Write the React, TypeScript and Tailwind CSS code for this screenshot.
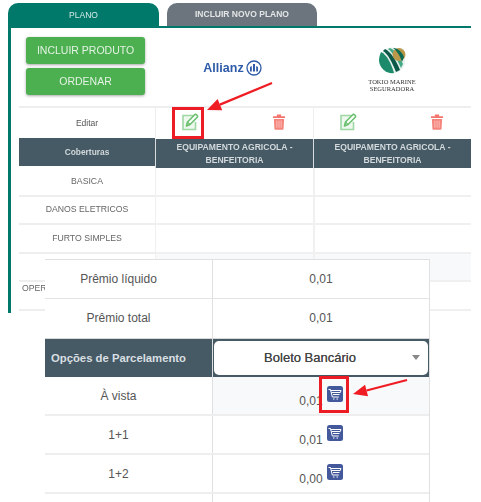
import React from "react";

const EditIcon = () => (
  <svg width="18" height="18" viewBox="0 0 18 18" fill="none" className="block">
    <path d="M12.500 2.500H2v14h12.500V9" stroke="#9ed8a4" strokeWidth="1.600" fill="#eef8ef" />
    <path d="M5.500 13l1-4L14 1.500c1-.7 3 1.300 2.500 2.500L9 11.500z" fill="#fff" stroke="#6cc070" strokeWidth="1.600" strokeLinejoin="round" />
    <path d="M6.500 9l2.500 2.500" stroke="#6cc070" strokeWidth="1.200" />
  </svg>
);

const TrashIcon = () => (
  <svg width="12" height="16" viewBox="0 0 14 18" preserveAspectRatio="none" className="block">
    <path d="M4.500 .5h5V2.500h4.500v2H0v-2h4.500z" fill="#f4756d" />
    <path d="M1 5.500h12l-.7 11.500a1 1 0 0 1-1 .8H2.700a1 1 0 0 1-1-.8z" fill="#f5847c" />
    <path d="M4.500 7.500v8M7 7.500v8M9.500 7.500v8" stroke="#fbc9c5" strokeWidth="1" />
  </svg>
);

const CartIcon = () => (
  <svg width="16" height="16" viewBox="0 0 16 16" className="block">
    <rect width="16" height="16" rx="2.500" fill="#43599c" />
    <path d="M1.500 3.500h2l1.800 7.500h6.500M3.700 4.500h10.300l-.7 2H4.500M6 8.500h6.500" stroke="#fff" strokeWidth="1" fill="none" />
    <path d="M6 13h1.500M9.500 13H11" stroke="#fff" strokeWidth="1.200" />
  </svg>
);

const TokioLogo = () => (
  <svg width="28" height="27" viewBox="0 0 28 27" className="block">
    <circle cx="14" cy="13.500" r="13" fill="#e8f2ec" />
    <path d="M3 5c6 3 10 11 13 21-7 1-14-4-15-12 0-3 .7-6 2-9z" fill="#1d8b6b" />
    <path d="M7 2c6 3 11 11 15 21l-4 2C14 15 10 7 5 4z" fill="#0b5a49" />
    <path d="M12 1c5 2 10 9 13 16l-2 4C19 12 15 6 10 2z" fill="#43a986" />
    <circle cx="21" cy="7.500" r="6.500" fill="#b9984a" />
    <path d="M15 1c3 2 7 7 9 14l2-5c-1-4-6-9-11-9z" fill="#0f6a55" />
  </svg>
);

const AllianzMark = () => (
  <svg width="16" height="16" viewBox="0 0 16 16" className="block">
    <circle cx="8" cy="8" r="7" fill="none" stroke="#2f5ba8" strokeWidth="1.300" />
    <path d="M4 11.500V7l1.800-1v5.500zM7 11.500V4h2v7.500zM10.200 11.500V6l1.800 1v4.500z" fill="#2f5ba8" />
  </svg>
);

const Arrow = ({ x1, y1, x2, y2 }: { x1: number; y1: number; x2: number; y2: number }) => {
  const a = Math.atan2(y2 - y1, x2 - x1);
  const l = 14;
  const w = 6;
  const bx = x2 - l * Math.cos(a);
  const by = y2 - l * Math.sin(a);
  const px = -Math.sin(a) * w;
  const py = Math.cos(a) * w;
  return (
    <>
      <line x1={x1} y1={y1} x2={bx} y2={by} stroke="#ef1c24" strokeWidth="2.200" />
      <polygon points={`${x2},${y2} ${bx + px},${by + py} ${bx - px},${by - py}`} fill="#ef1c24" />
    </>
  );
};

const covers = ["BASICA", "DANOS ELETRICOS", "FURTO SIMPLES", "", "OPER"];

const rowsBottom = [
  { label: "À vista", value: "0,01", shade: true, h: "h-[39px]" },
  { label: "1+1", value: "0,01", shade: false, h: "h-[39px]" },
  { label: "1+2", value: "0,00", shade: false, h: "h-[39px]" },
  { label: "", value: "", shade: false, h: "h-[8px]" },
];

export default function App() {
  return (
    <div className="relative w-[481px] h-[502px] overflow-hidden bg-white font-['Liberation_Sans',Arial,sans-serif]">
      {/* upper screenshot */}
      <div className="pl-[8px] pr-[10px] pt-[3px] h-[313px] blur-[0.35px]">
        <div className="flex gap-[8px] items-start h-[23px]">
          <div className="w-[151px] h-[24px] bg-[#00796b] rounded-t-[10px] flex items-center justify-center text-[8.500px] text-[#d4ebe6]">
            PLANO
          </div>
          <div className="w-[150px] h-[23px] bg-[#6c757d] rounded-t-[10px] flex items-center justify-center text-[8.500px] font-bold text-[#e3e5e7]">
            INCLUIR NOVO PLANO
          </div>
        </div>
        <div className="border-t-[2px] border-l-[3px] border-[#00796b] h-[287px] pl-[8px]">
          <div className="grid grid-cols-[136px_158px_158px] h-[80px] border-b-[2px] border-[#eeeeee]">
            <div className="pt-[9px] pl-[7px] flex flex-col gap-[4px]">
              <div className="w-[119px] h-[27px] bg-[#4caf50] rounded-[3px] shadow-[0_1px_3px_rgba(0,0,0,0.35)] flex items-center justify-center text-[10.500px] text-[#e4f3e4]">
                INCLUIR PRODUTO
              </div>
              <div className="w-[119px] h-[27px] bg-[#4caf50] rounded-[3px] shadow-[0_1px_3px_rgba(0,0,0,0.35)] flex items-center justify-center text-[10.500px] text-[#e4f3e4]">
                ORDENAR
              </div>
            </div>
            <div className="flex items-center justify-center gap-[2px] pt-[2px] pr-[3px]">
              <span className="text-[12.500px] font-bold text-[#2f5ba8]">Allianz</span>
              <AllianzMark />
            </div>
            <div className="flex flex-col items-center justify-start pt-[19px]">
              <TokioLogo />
              <span className="mt-[4px] text-[6.500px] leading-[7px] text-[#333] font-['Liberation_Serif',serif] text-center">
                TOKIO MARINE
                <br />
                SEGURADORA
              </span>
            </div>
          </div>
          <div className="grid grid-cols-[136px_158px_158px] h-[30px]">
            <div className="flex items-center justify-center text-[8.500px] text-[#555]">Editar</div>
            <div className="border-l-[1px] border-[#eeeeee] flex items-center justify-between pl-[25px] pr-[28px] pb-[2px]">
              <EditIcon />
              <TrashIcon />
            </div>
            <div className="border-l-[1px] border-[#eeeeee] flex items-center justify-between pl-[25px] pr-[28px] pb-[2px]">
              <EditIcon />
              <TrashIcon />
            </div>
          </div>
          <div className="grid grid-cols-[136px_158px_158px] h-[30px] text-[#d3d9dc]">
            <div className="h-[28px] bg-[#455a64] flex items-center justify-center text-[8.400px] font-bold">Coberturas</div>
            <div className="h-[29px] mt-[1px] bg-[#455a64] flex items-center justify-center text-center text-[8.600px] leading-[13px] font-bold px-[8px] border-l-[1px] border-[#d8dcde]">
              EQUIPAMENTO AGRICOLA - BENFEITORIA
            </div>
            <div className="h-[29px] mt-[1px] bg-[#455a64] flex items-center justify-center text-center text-[8.600px] leading-[13px] font-bold px-[8px] border-l-[1px] border-[#d8dcde]">
              EQUIPAMENTO AGRICOLA - BENFEITORIA
            </div>
          </div>
          {covers.map((c, i) => (
            <div key={i} className="grid grid-cols-[136px_158px_158px] h-[28.500px]">
              <div className="border-b-[2px] border-[#eeeeee] flex items-center justify-center text-[8.700px] text-[#666]">
                <span className={c === "OPER" ? "w-full pl-[3px] pb-[14px]" : ""}>{c}</span>
              </div>
              <div className={`border-l-[1px] border-b-[2px] border-[#f0f0f0] ${i === 3 ? "bg-[#f8f9fa]" : ""}`} />
              <div className={`border-l-[2px] border-b-[2px] border-[#f0f0f0] ${i === 3 ? "bg-[#f8f9fa]" : ""}`} />
            </div>
          ))}
        </div>
      </div>

      {/* lower screenshot, laid over the upper one */}
      <div className="absolute left-[45px] top-[259px] w-[385px] h-[243px] bg-white border-r-[1px] border-t-[1px] border-[#e0e0e0] text-[12px] text-[#555]">
        <div className="grid grid-cols-[167px_1fr] h-[39px] border-b-[1px] border-[#e4e4e4]">
          <div className="flex items-center justify-center pr-[20px]">Prêmio líquido</div>
          <div className="flex items-center justify-center border-l-[1px] border-[#e0e0e0] text-[12px]">0,01</div>
        </div>
        <div className="grid grid-cols-[167px_1fr] h-[39px]">
          <div className="flex items-center justify-center pr-[20px] pb-[2px]">Prêmio total</div>
          <div className="flex items-center justify-center border-l-[1px] border-[#e0e0e0] text-[12px] pb-[2px]">0,01</div>
        </div>
        <div className="grid grid-cols-[167px_1fr] h-[39px] border-t-[1px] border-[#d8d8d8] bg-[#455a64]">
          <div className="flex items-center pl-[6px] text-[11.300px] font-bold text-[#d9dfe2]">Opções de Parcelamento</div>
          <div className="border-l-[1px] border-[#e0e0e0] py-[2px] pl-[1px] pr-[1px]">
            <div className="relative h-[34px] bg-white rounded-[5px] flex items-center justify-center pr-[22px] text-[13px] text-[#444] [text-shadow:0_0_0.6px_#555]">
              Boleto Bancário
              <span className="absolute right-[8px] top-[14px] border-x-[4px] border-t-[5px] border-x-transparent border-t-[#888]" />
            </div>
          </div>
        </div>
        {rowsBottom.map((r, i) => (
          <div key={i} className={`grid grid-cols-[167px_1fr] ${r.h} ${r.label ? "border-b-[2px] border-[#eeeeee]" : ""}`}>
            <div className="flex items-center justify-center pr-[20px] pt-[1px]">{r.label}</div>
            <div className={`border-l-[1px] border-[#e0e0e0] flex items-start justify-center pt-[9px] gap-[4px] ${r.shade ? "bg-[#f8f9fa]" : ""}`}>
              {r.value && (
                <>
                  <span className="text-[12px] mt-[6px]">{r.value}</span>
                  <CartIcon />
                </>
              )}
            </div>
          </div>
        ))}
      </div>

      {/* annotations */}
      <div className="absolute left-[172px] top-[107px] w-[32px] h-[32px] border-[3px] border-[#ed1c24]" />
      <div className="absolute left-[319px] top-[376px] w-[30px] h-[37px] border-[3px] border-[#ed1c24]" />
      <svg className="absolute left-0 top-0 pointer-events-none" width="481" height="502">
        <Arrow x1={272} y1={83} x2={207} y2={110} />
        <Arrow x1={407} y1={380} x2={353} y2={394} />
      </svg>
    </div>
  );
}
